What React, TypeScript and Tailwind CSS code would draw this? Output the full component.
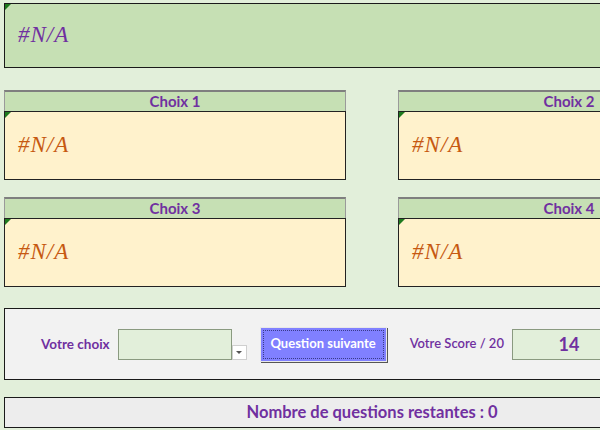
import React from "react";

const font = { fontFamily: "Lato, 'Open Sans', sans-serif" };

function Corner() {
  return (
    <div className="absolute left-0 top-0 w-0 h-0 border-t-[6px] border-r-[6px] border-t-[#1e7a1e] border-r-transparent" />
  );
}

function NA({ color }: { color: string }) {
  return (
    <span
      className={`italic text-[23px] tracking-[1px] ${color}`}
      style={{ fontFamily: "'Liberation Serif', 'DejaVu Serif', serif" }}
    >
      #N/A
    </span>
  );
}

function ChoiceCard({ title }: { title: string }) {
  return (
    <div className="w-[342px] shrink-0">
      <div className="h-[21px] bg-[#c6e0b4] border-t-2 border-x border-t-[#7f7f7f] border-x-[#9a9a9a] flex items-center justify-center">
        <span className="text-[15px] font-bold text-[#7030a0]">{title}</span>
      </div>
      <div className="relative h-[69px] bg-[#fff2cc] border border-[#222] flex items-center pl-[13px]">
        <Corner />
        <NA color="text-[#c65911]" />
      </div>
    </div>
  );
}

export default function App() {
  return (
    <div
      className="w-[600px] h-[430px] overflow-hidden bg-[#e2efda] pl-[4px]"
      style={font}
    >
      <div className="w-[800px]">
        <div className="mt-[3px] relative h-[65px] bg-[#c6e0b4] border border-[#1a1a1a] flex items-center pl-[13px]">
          <Corner />
          <NA color="text-[#7030a0]" />
        </div>

        <div className="mt-[22px] flex gap-[52px]">
          <ChoiceCard title="Choix 1" />
          <ChoiceCard title="Choix 2" />
        </div>
        <div className="mt-[17px] flex gap-[52px]">
          <ChoiceCard title="Choix 3" />
          <ChoiceCard title="Choix 4" />
        </div>

        <div className="mt-[21px] h-[72px] bg-[#f2f2f2] border border-[#1a1a1a] flex items-center pl-[36px]">
          <span className="text-[13.5px] font-bold text-[#7030a0]">Votre choix</span>
          <div className="ml-[8px] flex items-end">
            <div className="w-[114px] h-[31px] bg-[#e2efda] border border-[#8a9a80]" />
            <div className="w-[15px] h-[15px] bg-white border border-[#cfcfcf] flex items-center justify-center">
              <div className="w-0 h-0 border-l-[3px] border-r-[3px] border-t-[3px] border-l-transparent border-r-transparent border-t-[#555]" />
            </div>
          </div>
          <button className="ml-[13px] w-[127px] h-[35px] bg-[#8080ff] border border-[#e8e8e8] shadow-[1px_1px_0_#555] flex items-center justify-center p-[2px]">
            <div className="w-full h-full border border-dotted border-[#3a3a8a] flex items-center justify-center">
              <span className="text-[13px] font-bold text-white">Question suivante</span>
            </div>
          </button>
          <span className="ml-[23px] text-[13px] font-semibold text-[#7030a0]">Votre Score / 20</span>
          <div className="ml-[8px] w-[114px] h-[31px] bg-[#e2efda] border border-[#8a9a80] flex items-center justify-center">
            <span className="text-[18px] font-bold text-[#7030a0]">14</span>
          </div>
        </div>

        <div className="mt-[17px] w-[736px] h-[31px] bg-[#ededed] border border-[#1a1a1a] flex items-center justify-center">
          <span className="text-[16.5px] font-bold text-[#7030a0]">Nombre de questions restantes : 0</span>
        </div>
      </div>
    </div>
  );
}
